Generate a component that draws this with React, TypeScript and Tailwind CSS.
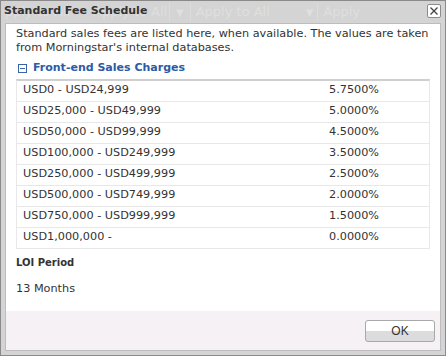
import { useState } from 'react';

const charges = [
    { band: 'USD0 - USD24,999', rate: '5.7500%' },
    { band: 'USD25,000 - USD49,999', rate: '5.0000%' },
    { band: 'USD50,000 - USD99,999', rate: '4.5000%' },
    { band: 'USD100,000 - USD249,999', rate: '3.5000%' },
    { band: 'USD250,000 - USD499,999', rate: '2.5000%' },
    { band: 'USD500,000 - USD749,999', rate: '2.0000%' },
    { band: 'USD750,000 - USD999,999', rate: '1.5000%' },
    { band: 'USD1,000,000 -', rate: '0.0000%' },
];

export default function App() {
    const [open, setOpen] = useState(true);

    return (
        <div className="w-[446px] h-[356px] bg-[#d4d4d4] border border-[#8a8a8a] flex flex-col font-['DejaVu_Sans',Verdana,sans-serif] text-[#333]">
            {/* title bar, with the page behind showing through */}
            <div className="relative h-[22px] shrink-0">
                <div className="absolute inset-0 flex items-center text-[13px] text-[#dfdfdf] pointer-events-none">
                    <span className="ml-[4px] w-[88px]">pply to All</span>
                    <span className="w-[76px]">Apply to All</span>
                    <span className="w-px h-[18px] bg-[#dcdcdc]" />
                    <span className="mx-[6px] text-[10px]">▼</span>
                    <span className="w-px h-[18px] bg-[#dcdcdc]" />
                    <span className="ml-[5px] w-[88px]">Apply to All</span>
                    <span className="w-[18px]" />
                    <span className="mx-[4px] text-[10px]">▼</span>
                    <span className="w-px h-[18px] bg-[#dcdcdc]" />
                    <span className="ml-[5px]">Apply</span>
                </div>
                <div className="relative flex items-center justify-between h-full pl-[3px] pr-[4px]">
                    <span className="text-[11px] font-bold text-[#333] -mt-[2px]">Standard Fee Schedule</span>
                    <button className="w-[14px] h-[14px] -mt-[2px] border border-[#8c8c8c] rounded-[2px] bg-white flex items-center justify-center">
                        <svg width="10" height="10" viewBox="0 0 10 10">
                            <path d="M1.5 1.5 L8.5 8.5 M8.5 1.5 L1.5 8.5" stroke="#444" strokeWidth="1.3" />
                        </svg>
                    </button>
                </div>
            </div>

            <div className="mx-[4px] mb-[4px] flex-1 flex flex-col border border-[#bdbdbd] bg-white">
                <div className="flex-1 px-[10px] pt-[3px]">
                    <p className="text-[11.25px] leading-[14px] text-[#333]">
                        Standard sales fees are listed here, when available. The values are taken from Morningstar's internal databases.
                    </p>

                    <button
                        onClick={() => setOpen(!open)}
                        className="mt-[5px] flex items-center gap-[6px] pl-[2px]"
                    >
                        <span className="w-[9px] h-[9px] border border-[#3b63a8] flex items-center justify-center">
                            <span className="w-[5px] h-px bg-[#3b63a8]" />
                        </span>
                        <span className="text-[11px] font-bold text-[#2b5ba6]">Front-end Sales Charges</span>
                    </button>

                    {open && (
                        <div className="mt-[2px] border-t-2 border-t-[#cfcfcf] border-x border-x-[#e8e8e8]">
                            {charges.map((c) => (
                                <div
                                    key={c.band}
                                    className="flex items-center h-[21px] border-b border-[#e8e8e8] text-[11.25px]"
                                >
                                    <span className="pl-[6px] w-[312px]">{c.band}</span>
                                    <span>{c.rate}</span>
                                </div>
                            ))}
                        </div>
                    )}

                    <div className="mt-[6px] text-[10px] font-bold text-[#333]">LOI Period</div>
                    <div className="mt-[11px] text-[11.25px]">13 Months</div>
                </div>

                <div className="h-[39px] shrink-0 bg-[#f5f1f4] flex items-center justify-end pr-[5px]">
                    <button className="w-[70px] h-[22px] rounded-[3px] border border-[#a8a8a8] bg-[linear-gradient(#ffffff_0%,#ffffff_50%,#dcdcdc_50%,#dcdcdc_100%)] text-[12px] text-[#333] font-['Liberation_Sans',Arial,sans-serif]">
                        OK
                    </button>
                </div>
            </div>
        </div>
    );
}
